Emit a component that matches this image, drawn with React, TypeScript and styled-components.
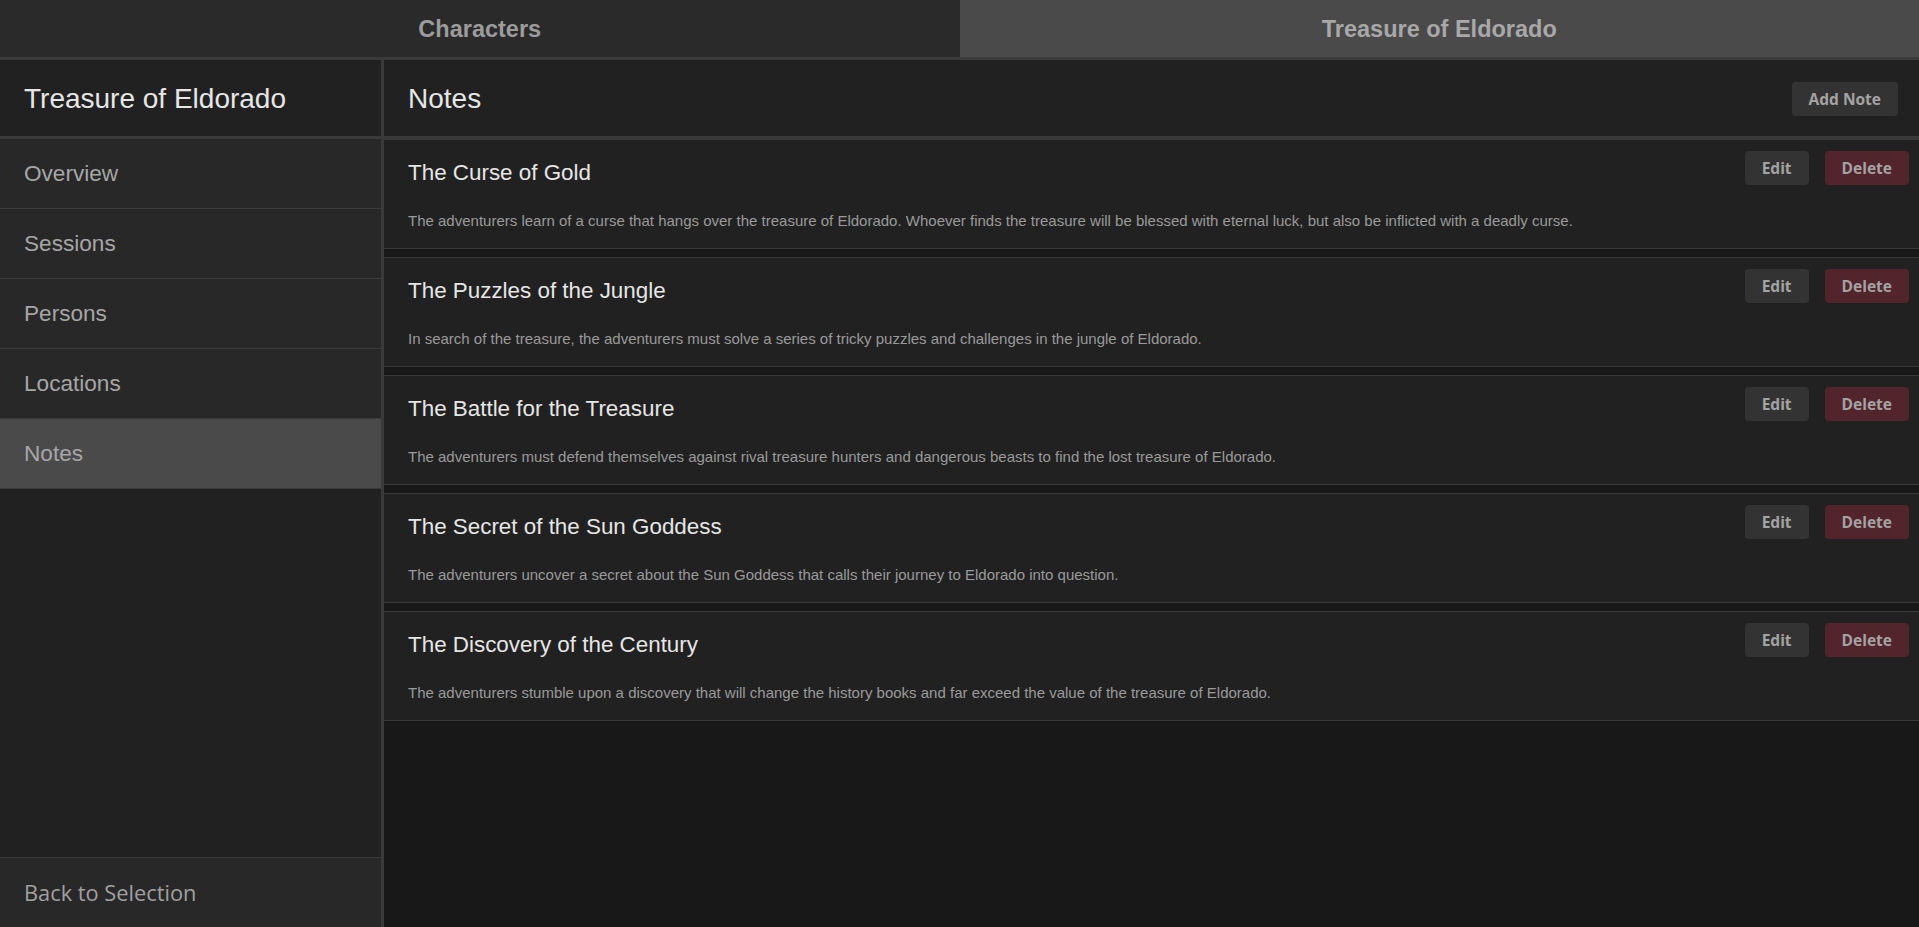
import styled, { createGlobalStyle } from 'styled-components'

const GlobalStyle = createGlobalStyle`
  html, body {
    margin: 0;
    padding: 0;
    background: #181818;
  }
  * {
    box-sizing: border-box;
  }
  #root {
    height: 100vh;
  }
`

const notes = [
  {
    id: 1,
    title: 'The Curse of Gold',
    text: 'The adventurers learn of a curse that hangs over the treasure of Eldorado. Whoever finds the treasure will be blessed with eternal luck, but also be inflicted with a deadly curse.',
  },
  {
    id: 2,
    title: 'The Puzzles of the Jungle',
    text: 'In search of the treasure, the adventurers must solve a series of tricky puzzles and challenges in the jungle of Eldorado.',
  },
  {
    id: 3,
    title: 'The Battle for the Treasure',
    text: 'The adventurers must defend themselves against rival treasure hunters and dangerous beasts to find the lost treasure of Eldorado.',
  },
  {
    id: 4,
    title: 'The Secret of the Sun Goddess',
    text: 'The adventurers uncover a secret about the Sun Goddess that calls their journey to Eldorado into question.',
  },
  {
    id: 5,
    title: 'The Discovery of the Century',
    text: 'The adventurers stumble upon a discovery that will change the history books and far exceed the value of the treasure of Eldorado.',
  },
]

const menu = ['Overview', 'Sessions', 'Persons', 'Locations', 'Notes']

export default function App() {
  return (
    <Page>
      <GlobalStyle />
      <Tabs>
        <Tab>Characters</Tab>
        <Tab active>Treasure of Eldorado</Tab>
      </Tabs>
      <Body>
        <Sidebar>
          <SideHeader>Treasure of Eldorado</SideHeader>
          <Menu>
            {menu.map((m) => (
              <MenuItem key={m} active={m === 'Notes'}>{m}</MenuItem>
            ))}
          </Menu>
          <BackLink>Back to Selection</BackLink>
        </Sidebar>
        <Main>
          <MainHeader>
            <Title>Notes</Title>
            <Button>Add Note</Button>
          </MainHeader>
          <List>
            {notes.map((n) => (
              <Card key={n.id}>
                <CardBody>
                  <CardTitle>{n.title}</CardTitle>
                  <CardText>{n.text}</CardText>
                </CardBody>
                <Actions>
                  <Button>Edit</Button>
                  <Button danger>Delete</Button>
                </Actions>
              </Card>
            ))}
          </List>
        </Main>
      </Body>
    </Page>
  )
}

const Page = styled.div`
  height: 100%;
  display: flex;
  flex-direction: column;
  font-family: "Liberation Sans", Arial, sans-serif;
  overflow: hidden;
`

const Tabs = styled.div`
  display: flex;
  height: 60px;
  border-bottom: 3px solid #3a3a3a;
  flex-shrink: 0;
`

const Tab = styled.div<{ active?: boolean }>`
  flex: 1;
  display: flex;
  align-items: center;
  justify-content: center;
  padding-top: 1px;
  background: ${(p) => (p.active ? '#4a4a4a' : '#2a2a2a')};
  color: ${(p) => (p.active ? '#a8a8a8' : '#9c9c9c')};
  font-size: 23.5px;
  font-weight: 700;
  cursor: pointer;
`

const Body = styled.div`
  flex: 1;
  display: flex;
  min-height: 0;
`

const Sidebar = styled.div`
  width: 384px;
  flex-shrink: 0;
  display: flex;
  flex-direction: column;
  background: #212121;
  border-right: 3px solid #3a3a3a;
`

const SideHeader = styled.div`
  height: 79px;
  display: flex;
  align-items: center;
  padding: 1px 24px 0;
  color: #e6e6e6;
  font-size: 28px;
  border-bottom: 3px solid #3a3a3a;
`

const Menu = styled.div`
  flex: 1;
  display: flex;
  flex-direction: column;
`

const MenuItem = styled.div<{ active?: boolean }>`
  height: 70px;
  display: flex;
  align-items: center;
  padding: 0 24px;
  background: ${(p) => (p.active ? '#4a4a4a' : '#282828')};
  color: #a6a6a6;
  font-size: 22.6px;
  border-bottom: 1px solid #3a3a3a;
  cursor: pointer;
`

const BackLink = styled.div`
  height: 70px;
  display: flex;
  align-items: center;
  padding: 0 24px;
  background: #282828;
  border-top: 1px solid #3a3a3a;
  color: #a0a0a0;
  font-family: "Open Sans", "Noto Sans", sans-serif;
  font-size: 21.8px;
  cursor: pointer;
`

const Main = styled.div`
  flex: 1;
  display: flex;
  flex-direction: column;
  background: #181818;
  min-width: 0;
`

const MainHeader = styled.div`
  height: 79px;
  display: flex;
  align-items: center;
  justify-content: space-between;
  padding: 1px 21px 0 24px;
  background: #212121;
  border-bottom: 3px solid #3a3a3a;
  flex-shrink: 0;
`

const Title = styled.div`
  color: #e6e6e6;
  font-size: 28px;
`

const Button = styled.button<{ danger?: boolean }>`
  height: 34px;
  padding: 0 17px;
  border: none;
  border-radius: 4px;
  background: ${(p) => (p.danger ? '#52242b' : '#333333')};
  color: #a3a3a3;
  font-family: "Open Sans", "Noto Sans", sans-serif;
  font-size: 15.5px;
  font-weight: 700;
  cursor: pointer;
`

const List = styled.div`
  display: flex;
  flex-direction: column;
  gap: 8px;
`

const Card = styled.div`
  display: flex;
  align-items: flex-start;
  padding: 0 10px 0 24px;
  background: #212121;
  border-top: 1px solid #3a3a3a;
  border-bottom: 1px solid #3a3a3a;
`

const CardBody = styled.div`
  flex: 1;
  padding: 20px 0 19px;
`

const CardTitle = styled.div`
  color: #e6e6e6;
  font-size: 22.4px;
  margin-bottom: 26px;
`

const CardText = styled.div`
  color: #9a9a9a;
  font-size: 15px;
`

const Actions = styled.div`
  display: flex;
  gap: 16px;
  margin-top: 11px;
`
